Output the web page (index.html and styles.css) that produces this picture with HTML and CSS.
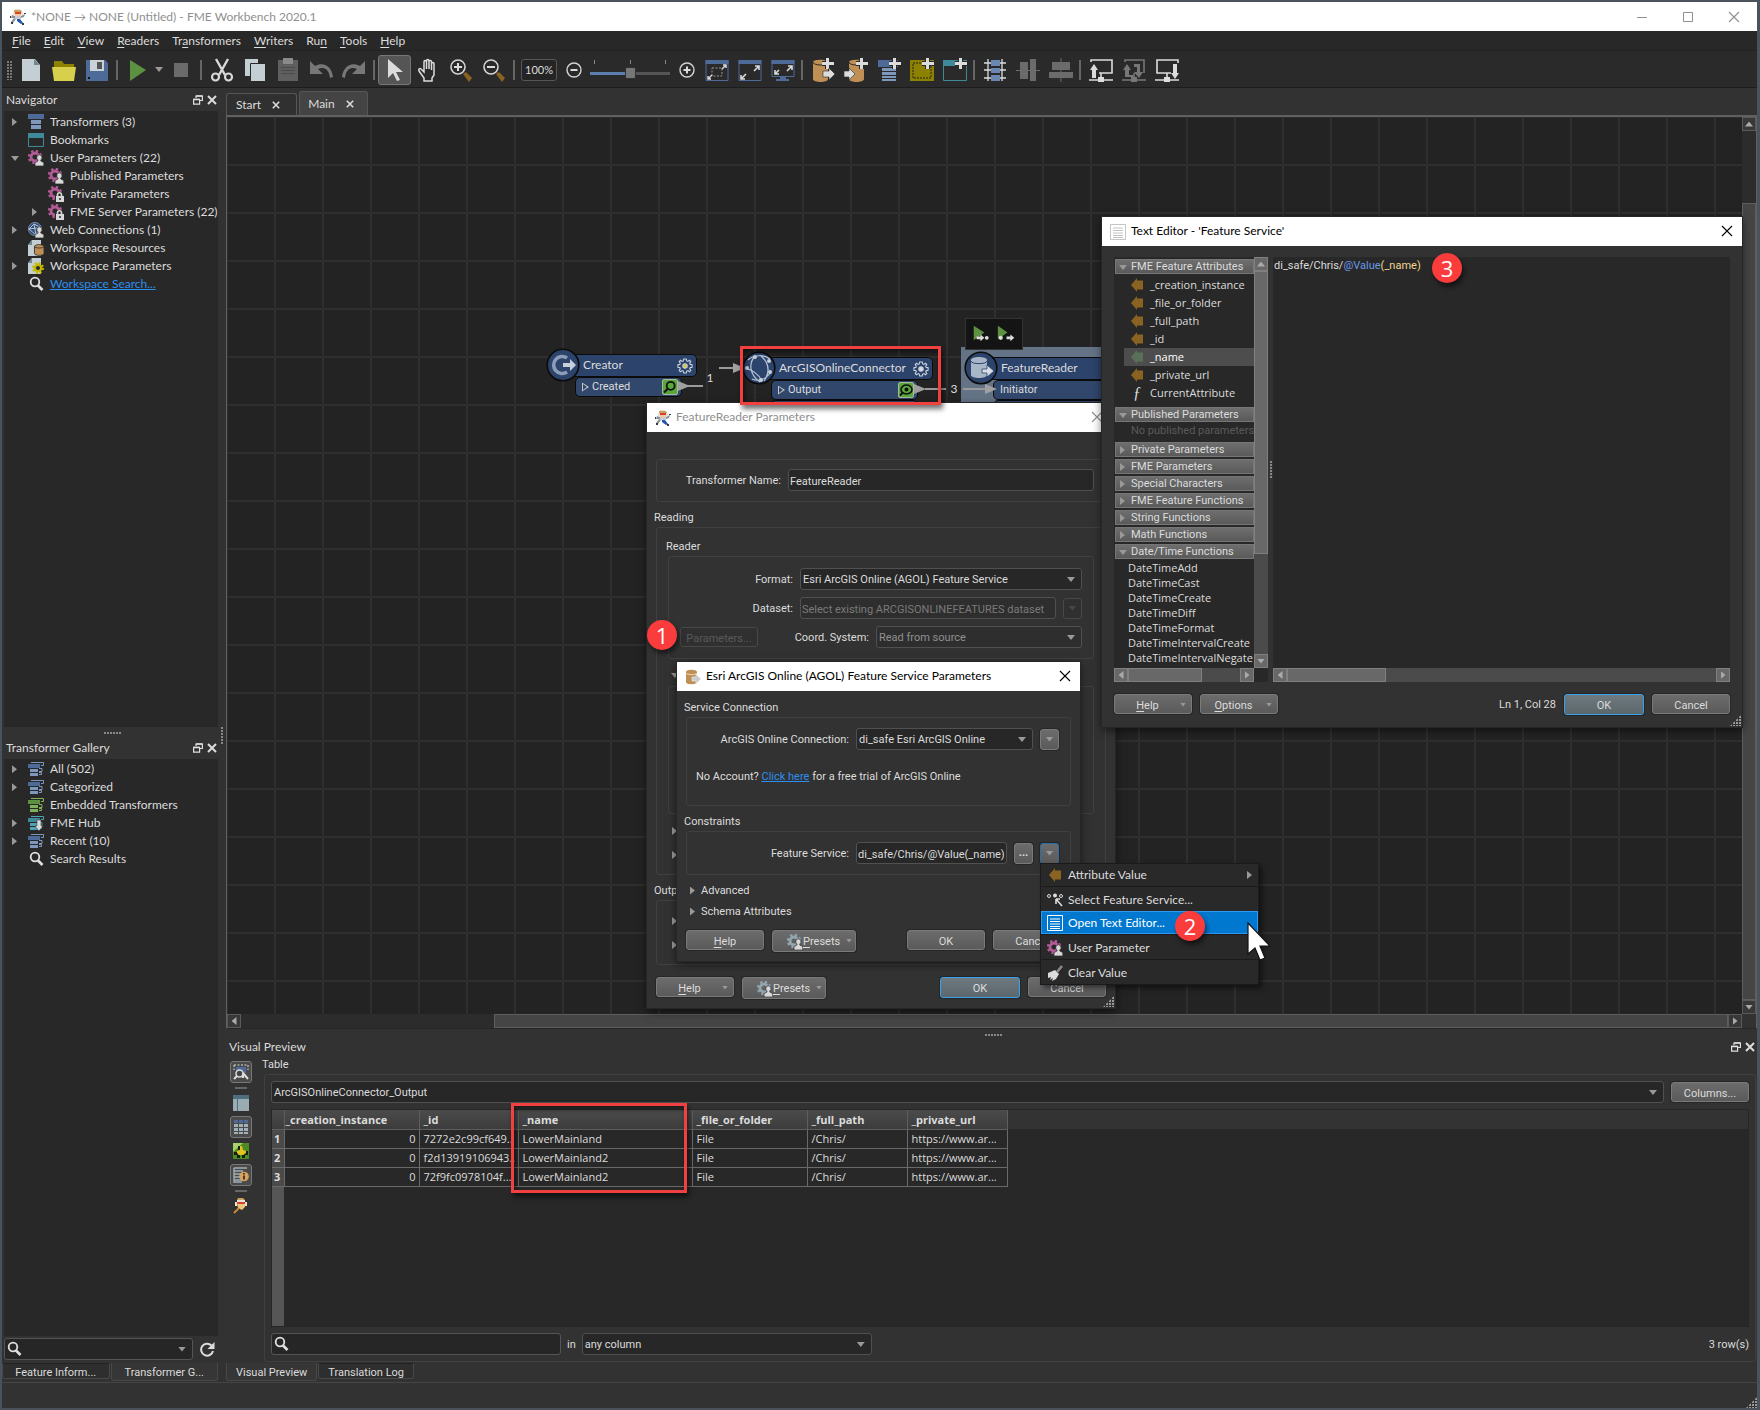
FILE: index.html
```html
<!DOCTYPE html>
<html lang="en">
<head>
<meta charset="utf-8">
<title>*NONE → NONE (Untitled) - FME Workbench 2020.1</title>
<link rel="stylesheet" href="styles.css">
</head>
<body>
<svg class="sprite" aria-hidden="true">
  <defs>
    <symbol id="i-fme" viewBox="0 0 16 16"><path fill="#c9a25e" d="M4 1h7l1 2H4z"/><path fill="#e8e2d8" d="M5 0h5v1H5zM3 3h2v3H3zM11 3h2v3h-2z"/><path fill="#d8402c" d="M5 3h6v2H5z"/><path fill="#f0c9a0" d="M5 5h6v2H5z"/><path fill="#8a8f98" d="M2 6l3 1v2L1 9zM11 7l4-2-1 3-3 1zM6 10l-3 4-2-1 3-4z"/><path fill="#c8ccd2" d="M5 7h6v3H5z"/><path fill="#1e56b0" d="M7 10h3l3 4-2 1-4-3z"/><path fill="#3a3a3a" d="M0 7h1v2H0zM14 4h2v1h-2zM1 13h2v2H1zM12 14h2v2h-2z"/></symbol>
    <symbol id="i-user" viewBox="0 0 16 16"><circle cx="7" cy="7" r="4" fill="none" stroke="currentColor" stroke-width="2.8"/><circle cx="7" cy="7" r="6" fill="none" stroke="currentColor" stroke-width="2.4" stroke-dasharray="2.36"/><path fill="#d8d8d8" stroke="#282828" stroke-width=".7" d="M11.500 4.800a2.500 2.800 0 0 1 1.300 5.200v1l3 1.600V16H7v-3.400l3-1.600v-1a2.500 2.800 0 0 1 1.500-5.200z"/></symbol>
    <symbol id="i-lock" viewBox="0 0 16 16"><circle cx="7" cy="7" r="4" fill="none" stroke="#b35b96" stroke-width="2.8"/><circle cx="7" cy="7" r="6" fill="none" stroke="#b35b96" stroke-width="2.4" stroke-dasharray="2.36"/><path fill="#282828" d="M7 6h9v10H7z"/><path fill="none" stroke="#d8d8d8" stroke-width="1.600" d="M9.500 11V9a2 2.200 0 0 1 4 0v2"/><path fill="#d8d8d8" d="M8 10h8v6H8z"/><path fill="#555" d="M11 12h2v2h-2z"/></symbol>
    <symbol id="i-transformers" viewBox="0 0 16 16"><path fill="#4d6a98" d="M0 0h16v5H0z"/><path fill="#7e97bd" d="M3 6h10v4H3zM3 11h10v4H3z"/></symbol>
    <symbol id="i-bookmark" viewBox="0 0 16 16"><path fill="#3f8a9a" d="M0 1h16v5H0z"/><path fill="none" stroke="#3f8a9a" d="M.5 3.500h15v11H.5z"/></symbol>
    <symbol id="i-web" viewBox="0 0 16 16"><circle cx="7" cy="7" r="6.500" fill="#2e4a78" stroke="#7b91b4"/><path fill="none" stroke="#b9c6da" d="M1 7l5-5 6 3-4 8-7-6 8-1M6 2l2 11"/><path fill="#d8d8d8" stroke="#282828" stroke-width=".7" d="M11.500 4.800a2.500 2.800 0 0 1 1.300 5.200v1l3 1.600V16H7v-3.400l3-1.600v-1a2.500 2.800 0 0 1 1.500-5.200z"/></symbol>
    <symbol id="i-resources" viewBox="0 0 16 16"><path fill="#c3cfd3" d="M4 0h9v16H0V5z"/><path fill="#6f8790" d="M0 5l4-5v5z"/><path fill="#c08f55" stroke="#282828" stroke-width=".8" d="M6.500 6.500C6.500 4 16 4 16 6.500v7c0 2.500-9.500 2.500-9.500 0z"/><path fill="none" stroke="#282828" stroke-width=".8" d="M6.500 6.500C6.500 8.500 16 8.500 16 6.500"/></symbol>
    <symbol id="i-wparams" viewBox="0 0 16 16"><path fill="#c3cfd3" d="M4 0h9v16H0V5z"/><path fill="#6f8790" d="M0 5l4-5v5z"/><circle cx="10" cy="10" r="3.200" fill="#282828" stroke="#c5b800" stroke-width="2.400"/><circle cx="10" cy="10" r="5" fill="none" stroke="#c5b800" stroke-width="2" stroke-dasharray="1.960"/></symbol>
    <symbol id="i-search" viewBox="0 0 16 16"><circle cx="7" cy="6" r="4.300" fill="none" stroke="#e0e0e0" stroke-width="1.800"/><path stroke="#e0e0e0" stroke-width="2.600" d="M10 9.500l4.500 4.500"/></symbol>
    <symbol id="i-cat" viewBox="0 0 16 16"><path d="M0 3h12v4H0z"/><path fill="currentColor" d="M2 8h8v3H2zM2 12h8v3H2z"/><path fill="none" stroke="currentColor" d="M3 1.500h12.500v3H13M11 7.500h3v3h-3M11 11.500h2.500v2H11"/></symbol>
    <symbol id="i-db" viewBox="0 0 16 16"><path fill="#c08f55" d="M1 3c0-3 11-3 11 0v10c0 3-11 3-11 0z"/><path fill="none" stroke="#f1e3cf" stroke-width=".9" d="M1 4c0 2 11 2 11 0"/><path fill="#c9ccce" stroke="#fff" stroke-width=".5" d="M7 8h4V5l5 5-5 5v-3H7z"/></symbol>
    <symbol id="i-doc" viewBox="0 0 16 16"><path fill="none" stroke="currentColor" d="M.5.5h15v15H.5zM3 4h10M3 6.500h10M3 9h10M3 11.500h10M3 13.500h10"/></symbol>
    <symbol id="i-attr" viewBox="0 0 12 14"><path fill="currentColor" d="M0 7l6-7v2.500h6v9H6V14z"/></symbol>
    <symbol id="i-float" viewBox="0 0 10 10"><path fill="none" stroke="#e0e0e0" stroke-width="1.200" d="M3 3V1h6.400v4.500H7M.6 4.400h6v4.800h-6z"/><path stroke="#e0e0e0" stroke-width="1.600" d="M3 1h6.500M.5 4.500h6"/></symbol>
    <symbol id="i-x" viewBox="0 0 10 10"><path stroke="currentColor" stroke-width="2" d="M1 1l8 8M9 1l-8 8"/></symbol>
    <symbol id="i-close" viewBox="0 0 12 12"><path stroke="currentColor" stroke-width="1.100" d="M1 1l10 10M11 1L1 11"/></symbol>
    <symbol id="i-zoom" viewBox="0 0 24 24"><circle cx="9" cy="9" r="7" fill="none" stroke="#d5d5d5" stroke-width="1.600"/><path fill="#8b6220" d="M14 16l3-2 6 6-3 4z"/></symbol>
    <symbol id="i-dbw" viewBox="0 0 24 24"><path fill="#c08f55" d="M2 4c0-3 15-3 15 0v17c0 4-15 4-15 0z"/><path fill="none" stroke="#282828" d="M2 4c0 4 15 4 15 0"/></symbol>
    <symbol id="i-plus" viewBox="0 0 24 24"><path fill="none" stroke="#282828" stroke-width="5" d="M17.500 0v11M12 5.500h12"/><path fill="none" stroke="#dcdcdc" stroke-width="3" d="M17.500 0v11M12 5.500h12"/></symbol>
    <symbol id="i-cog" viewBox="0 0 16 16"><path fill="none" stroke="#c9d3df" stroke-width="1.100" d="M6.700 1h2.600l.4 1.900 1.200.5 1.600-1.100 1.300 1.300-1.100 1.600.5 1.200 1.900.4v2.400l-1.900.4-.5 1.200 1.100 1.600-1.300 1.300-1.600-1.100-1.200.5-.4 1.900H6.700l-.4-1.900-1.200-.5-1.600 1.100-1.300-1.300 1.100-1.600-.5-1.200L.9 9.200V6.800l1.900-.4.5-1.200-1.100-1.600 1.300-1.300 1.600 1.100 1.200-.5z"/><circle cx="8" cy="8" r="2.200" fill="currentColor" stroke="#c9d3df" stroke-width="1.100"/></symbol>
    <symbol id="i-inspect" viewBox="0 0 16 16"><rect x=".5" y=".5" width="15" height="15" rx="1.500" fill="#58a93a" stroke="#a9b6a5"/><circle cx="8.700" cy="6.800" r="4" fill="none" stroke="#111" stroke-width="1.800"/><path stroke="#111" stroke-width="2.200" d="M6 9.500l-4 4"/></symbol>
    <symbol id="i-cached" viewBox="0 0 16 16"><rect x=".5" y=".5" width="15" height="15" rx="1.500" fill="#58a93a" stroke="#a9b6a5"/><ellipse cx="8.500" cy="7.500" rx="5.500" ry="4.500" fill="none" stroke="#111" stroke-width="1.600"/><circle cx="8.500" cy="7.500" r="2" fill="#111"/><path stroke="#111" stroke-width="2" d="M5 10.500l-3 3"/></symbol>
  </defs>
</svg>

<div class="app">
  <header class="titlebar">
    <svg class="ico16"><use href="#i-fme"/></svg>
    <h1>*NONE → NONE (Untitled) - FME Workbench 2020.1</h1>
    <div class="winbtns">
      <button aria-label="Minimize"><svg class="ico12" viewBox="0 0 12 12"><path stroke="currentColor" d="M1 6.500h10"/></svg></button>
      <button aria-label="Maximize"><svg class="ico12" viewBox="0 0 12 12"><path fill="none" stroke="currentColor" d="M1.500 1.500h9v9h-9z"/></svg></button>
      <button aria-label="Close"><svg class="ico12"><use href="#i-close"/></svg></button>
    </div>
  </header>

  <nav class="menubar">
    <button><u>F</u>ile</button><button><u>E</u>dit</button><button><u>V</u>iew</button><button><u>R</u>eaders</button><button>Tr<u>a</u>nsformers</button><button><u>W</u>riters</button><button>Ru<u>n</u></button><button><u>T</u>ools</button><button><u>H</u>elp</button>
  </nav>

  <div class="toolbar">
    <span class="handle"></span>
    <button class="tb" aria-label="New"><svg viewBox="0 0 24 24"><path fill="#c3cfd3" d="M3 1h13l5 6v16H3z"/><path fill="#6f8790" d="M15 1l6 6h-6z"/></svg></button>
    <button class="tb" aria-label="Open"><svg viewBox="0 0 24 24"><path fill="#8c8200" d="M2 3h8l2 3h10v6H2z"/><path fill="#d8d04c" d="M0 9h24l-2 14H2z"/></svg></button>
    <button class="tb" aria-label="Save"><svg viewBox="0 0 24 24"><path fill="#4d6a98" d="M1 2h19l3 3v18H1z"/><path fill="#c9d2d6" d="M5 2h14v11H5z"/><path fill="#555" d="M12 4h5v7h-5z"/><path fill="#111" d="M3 19h2v2H3z"/></svg></button>
    <span class="sep"></span>
    <button class="tb" aria-label="Run"><svg viewBox="0 0 24 24"><path fill="#5d9142" d="M4 2l16 10L4 23z"/></svg></button>
    <button class="tb tiny" aria-label="Run options"><span class="caret"></span></button>
    <button class="tb" aria-label="Stop"><svg viewBox="0 0 24 24"><path fill="#6b6b6b" d="M5 5h14v14H5z"/></svg></button>
    <span class="sep"></span>
    <button class="tb" aria-label="Cut"><svg viewBox="0 0 24 24"><path fill="none" stroke="#d8d8d8" stroke-width="2.400" d="M6 1l9 16M18 1L9 17"/><circle cx="5.500" cy="19" r="3.500" fill="none" stroke="#d8d8d8" stroke-width="2.200"/><circle cx="18.500" cy="19" r="3.500" fill="none" stroke="#d8d8d8" stroke-width="2.200"/></svg></button>
    <button class="tb" aria-label="Copy"><svg viewBox="0 0 24 24"><path fill="#c3cfd3" d="M2 1h13v17H2z"/><path fill="#c3cfd3" stroke="#282828" d="M7.500 5.500h15v18h-15z"/></svg></button>
    <button class="tb" aria-label="Paste"><svg viewBox="0 0 24 24"><path fill="#5f5f5f" d="M2 2h20v21H2z"/><path fill="#8a8a8a" d="M7 0h10v6H7z"/><path stroke="#4a4a4a" d="M5 9.500h14M5 12.500h14M5 15.500h14"/></svg></button>
    <button class="tb" aria-label="Undo"><svg viewBox="0 0 24 24"><path fill="#777" d="M1 3v13h13l-5-5c7-3 11 1 12 9l3-1C23 9 15 3 6 8z"/></svg></button>
    <button class="tb" aria-label="Redo"><svg viewBox="0 0 24 24"><path fill="#777" d="M23 3v13H10l5-5c-7-3-11 1-12 9l-3-1C1 9 9 3 18 8z"/></svg></button>
    <span class="sep"></span>
    <button class="tb active" aria-label="Select"><svg viewBox="0 0 24 24"><path fill="#dcdcdc" d="M5 1l15 13h-7l4 8-3 1-4-8-5 5z"/></svg></button>
    <button class="tb" aria-label="Pan"><svg viewBox="0 0 24 24"><path fill="none" stroke="#dcdcdc" stroke-width="1.500" d="M8 23v-3L3 13c-1-2 1-3 2-2l3 3V4c0-2 2-2 2.500 0v7V3c0-2 2.500-2 2.500 0v8V4c0-2 2.500-2 2.500 0v8V6c0-2 2.500-2 2.500 0v11l-2 3v3z"/></svg></button>
    <button class="tb" aria-label="Zoom in"><svg viewBox="0 0 24 24"><use href="#i-zoom"/><path stroke="#dcdcdc" stroke-width="2" d="M9 5v8M5 9h8"/></svg></button>
    <button class="tb" aria-label="Zoom out"><svg viewBox="0 0 24 24"><use href="#i-zoom"/><path stroke="#dcdcdc" stroke-width="2" d="M5 9h8"/></svg></button>
    <span class="sep"></span>
    <input class="zoomval" aria-label="Zoom level" value="100%">
    <button class="tb" aria-label="Decrease zoom"><svg class="ico16" viewBox="0 0 16 16"><circle cx="8" cy="8" r="7" fill="none" stroke="#d5d5d5" stroke-width="1.400"/><path stroke="#dcdcdc" stroke-width="2" d="M4.500 8h7"/></svg></button>
    <input class="slider" type="range" aria-label="Zoom" value="50">
    <button class="tb narrow" aria-label="Increase zoom"><svg class="ico16" viewBox="0 0 16 16"><circle cx="8" cy="8" r="7" fill="none" stroke="#d5d5d5" stroke-width="1.400"/><path stroke="#dcdcdc" stroke-width="2" d="M4.500 8h7M8 4.500v7"/></svg></button>
    <button class="tb" aria-label="Zoom to selection"><svg viewBox="0 0 24 24"><path fill="none" stroke="#4d6a98" d="M1 2.500h22v20H1z"/><path fill="#4d6a98" d="M.5 2h23v4H.5z"/><path fill="none" stroke="#999" stroke-dasharray="2 1.500" d="M7 10h10v8H7z"/><path stroke="#dcdcdc" stroke-width="1.400" fill="none" d="M17 11l4-4M18 7h3v3M7 17l-4 4M3 18v3h3"/></svg></button>
    <button class="tb" aria-label="Zoom extents"><svg viewBox="0 0 24 24"><path fill="none" stroke="#4d6a98" d="M1 2.500h22v20H1z"/><path fill="#4d6a98" d="M.5 2h23v4H.5z"/><path stroke="#dcdcdc" stroke-width="1.600" fill="none" d="M16 13l5-5M17 8h4v4M8 16l-5 5M3 17v4h4"/></svg></button>
    <button class="tb" aria-label="Full screen"><svg viewBox="0 0 24 24"><path fill="none" stroke="#4d6a98" d="M1 2.500h22v16H1z"/><path fill="#4d6a98" d="M.5 2h23v4H.5zM9 19h6v2h3v2H5v-2h4z"/><path stroke="#dcdcdc" stroke-width="1.600" fill="none" d="M16 13l5-5M17 8h4v4M8 12l-4 4M4 12v4h4"/></svg></button>
    <span class="sep"></span>
    <button class="tb" aria-label="Add reader"><svg viewBox="0 0 24 24"><use href="#i-dbw"/><use href="#i-plus" x="-1"/><path fill="#dcdcdc" stroke="#282828" stroke-width=".6" d="M12 13h6v-3l6 6-6 6v-3h-6z"/></svg></button>
    <button class="tb" aria-label="Add writer"><svg viewBox="0 0 24 24"><use href="#i-dbw" x="3"/><use href="#i-plus"/><path fill="#dcdcdc" stroke="#282828" stroke-width=".6" d="M0 13h5v-3l6 6-6 6v-3H0z"/></svg></button>
    <button class="tb" aria-label="Add transformer"><svg viewBox="0 0 24 24"><path fill="#4d6a98" d="M1 2h20v7H1z"/><path fill="#7e97bd" d="M5 10h14v3H5zM5 14h14v3H5zM5 18h14v2H5zM5 21h14v2H5z"/><use href="#i-plus"/></svg></button>
    <button class="tb" aria-label="Add annotation"><svg viewBox="0 0 24 24"><path fill="#8c8200" d="M0 2h24v21H0z"/><path fill="none" stroke="#222" stroke-dasharray="2 1" d="M3 5h18v15H3z"/><use href="#i-plus"/></svg></button>
    <button class="tb" aria-label="Add bookmark"><svg viewBox="0 0 24 24"><path fill="none" stroke="#3f8a9a" d="M.5 2.500h23v20H.5z"/><path fill="#3f8a9a" d="M0 2h24v6H0z"/><use href="#i-plus"/></svg></button>
    <span class="sep"></span>
    <button class="tb" aria-label="Grid layout"><svg viewBox="0 0 24 24"><path stroke="#dcdcdc" stroke-width="1.300" d="M5 1v22M19 1v22M1 5h22M1 12h22M1 20h22"/><path fill="#6b88b5" d="M8 2h9v6H8zM8 10h9v5H8zM8 17h9v6H8z"/></svg></button>
    <button class="tb" aria-label="Align vertical"><svg viewBox="0 0 24 24"><path stroke="#6b6b6b" d="M0 12.500h24"/><path fill="#6b6b6b" d="M4 4h8v17H4zM14 1h6v22h-6z"/></svg></button>
    <button class="tb" aria-label="Align horizontal"><svg viewBox="0 0 24 24"><path stroke="#6b6b6b" d="M12 0v24"/><path fill="#6b6b6b" d="M3 4h18v8H3zM0 14h24v6H0z"/></svg></button>
    <span class="sep"></span>
    <button class="tb" aria-label="Upload"><svg viewBox="0 0 24 24"><path fill="none" stroke="#dcdcdc" stroke-width="1.600" d="M2 4V2h21v13H10M12 15v6M0 22h24"/><path fill="#dcdcdc" d="M5 6l4 6H7v8H3v-8H1zM9 19h6v5H9z"/></svg></button>
    <button class="tb" aria-label="Republish"><svg viewBox="0 0 24 24"><path fill="none" stroke="#777" stroke-width="1.600" d="M3 4V2h19v13M12 15v6M0 22h24"/><path fill="#777" d="M5 6l4 6H7v5h4v2H3v-7H1zM17 20l-5-6h3V9h-3V6h6v8h3zM9 19h6v5H9z"/></svg></button>
    <button class="tb" aria-label="Download"><svg viewBox="0 0 24 24"><path fill="none" stroke="#dcdcdc" stroke-width="1.600" d="M16 15H2V2h21v3M12 15v6M0 22h24"/><path fill="#dcdcdc" d="M18 6h4v9h2l-4 6-4-6h2zM9 19h6v5H9z"/></svg></button>
  </div>

  <div class="workspace">
    <aside class="docks">
      <div class="dock-title"><h2>Navigator</h2><button aria-label="Float"><svg class="ico10"><use href="#i-float"/></svg></button><button aria-label="Close"><svg class="ico10"><use href="#i-x"/></svg></button></div>
      <ul class="tree navigator">
        <li><span class="tw right"></span><svg class="ico16"><use href="#i-transformers"/></svg>Transformers (3)</li>
        <li><span class="tw"></span><svg class="ico16"><use href="#i-bookmark"/></svg>Bookmarks</li>
        <li><span class="tw down"></span><svg class="ico16 pink"><use href="#i-user"/></svg>User Parameters (22)</li>
        <li class="child"><span class="tw"></span><svg class="ico16 pink"><use href="#i-user"/></svg>Published Parameters</li>
        <li class="child"><span class="tw"></span><svg class="ico16"><use href="#i-lock"/></svg>Private Parameters</li>
        <li class="child"><span class="tw right"></span><svg class="ico16"><use href="#i-lock"/></svg>FME Server Parameters (22)</li>
        <li><span class="tw right"></span><svg class="ico16"><use href="#i-web"/></svg>Web Connections (1)</li>
        <li><span class="tw"></span><svg class="ico16"><use href="#i-resources"/></svg>Workspace Resources</li>
        <li><span class="tw right"></span><svg class="ico16"><use href="#i-wparams"/></svg>Workspace Parameters</li>
        <li><span class="tw"></span><svg class="ico16"><use href="#i-search"/></svg><a href="#search">Workspace Search...</a></li>
      </ul>
      <div class="hsplit"></div>
      <div class="dock-title"><h2>Transformer Gallery</h2><button aria-label="Float"><svg class="ico10"><use href="#i-float"/></svg></button><button aria-label="Close"><svg class="ico10"><use href="#i-x"/></svg></button></div>
      <ul class="tree gallery">
        <li><span class="tw right"></span><svg class="ico16 blue"><use href="#i-cat"/></svg>All (502)</li>
        <li><span class="tw right"></span><svg class="ico16 blue"><use href="#i-cat"/></svg>Categorized</li>
        <li><span class="tw"></span><svg class="ico16 green"><use href="#i-cat"/></svg>Embedded Transformers</li>
        <li><span class="tw right"></span><svg class="ico16 teal" viewBox="0 0 16 16"><use href="#i-cat"/><path fill="#dcdcdc" stroke="#282828" stroke-width=".5" d="M9 5h4v6h2l-4 5-4-5h2z"/></svg>FME Hub</li>
        <li><span class="tw right"></span><svg class="ico16 blue"><use href="#i-cat"/></svg>Recent (10)</li>
        <li><span class="tw"></span><svg class="ico16"><use href="#i-search"/></svg>Search Results</li>
      </ul>
      <div class="dock-search">
        <div class="searchbox"><svg class="ico16"><use href="#i-search"/></svg><input aria-label="Search transformers"><span class="caret"></span></div>
        <button aria-label="Refresh"><svg class="ico16" viewBox="0 0 16 16"><path fill="none" stroke="#dcdcdc" stroke-width="2" d="M12.500 4.500A6 6 0 1 0 14 10"/><path fill="#dcdcdc" d="M15.500 1v7h-7z"/></svg></button>
      </div>
      <div class="bottom-tabs"><button>Feature Inform...</button><button class="on">Transformer G...</button></div>
    </aside>
    <div class="vsplit"></div>

    <main class="main">
      <div class="doc-tabs">
        <button>Start<svg class="ico8"><use href="#i-x"/></svg></button>
        <button class="on">Main<svg class="ico8"><use href="#i-x"/></svg></button>
      </div>
      <div class="canvas-frame">
        <div class="canvas">
          <div class="bookmark"></div>
          <svg class="wires" viewBox="0 0 800 300" width="800" height="300" fill="none" stroke="#9a9a9a" stroke-width="2"><path d="M460 269h16M492 251h16M698 272h21M736 272h24"/></svg>
          <div class="node creator">
            <div class="node-head"><span>Creator</span><svg class="ico16 lit"><use href="#i-cog"/></svg></div>
            <div class="port"><span class="pt"></span><span>Created</span><svg class="ico16"><use href="#i-inspect"/></svg></div>
            <svg class="orb" viewBox="0 0 34 34"><circle cx="17" cy="17" r="15.800" fill="#2c436b" stroke="#0b0b0b" stroke-width="1.600"/><path fill="none" stroke="#8c9db8" stroke-width="3.600" d="M21 10a8.500 8.500 0 1 0 0 14"/><path fill="#c6ced9" d="M17 15h7v-4l6 6-6 6v-4h-7z"/></svg>
          </div>
          <span class="tip t1"></span>
          <span class="count c1">1</span>
          <span class="tip t2"></span>
          <div class="node agol">
            <div class="node-head"><span>ArcGISOnlineConnector</span><svg class="ico16"><use href="#i-cog"/></svg></div>
            <div class="port"><span class="pt"></span><span>Output</span><svg class="ico16"><use href="#i-cached"/></svg></div>
            <div class="port"></div>
            <svg class="orb" viewBox="0 0 34 34"><circle cx="17" cy="17" r="15.800" fill="#2c436b" stroke="#0b0b0b" stroke-width="1.600"/><path fill="none" stroke="#b9c6da" stroke-width="1.200" d="M6 9c5-5 16-6 22-1M13 5C6 13 8 24 18 31M19 5c8 7 9 16 3 25M3 17c8 2 14 7 17 13M10 28c7 3 14 0 19-7"/><g fill="#c6ced9"><circle cx="13" cy="6" r="2"/><circle cx="27" cy="10" r="2"/><circle cx="5" cy="17" r="2"/><circle cx="19" cy="29" r="2"/><circle cx="28" cy="21" r="2"/></g></svg>
          </div>
          <span class="tip t3"></span>
          <span class="count c2">3</span>
          <div class="node reader">
            <div class="node-head"><span>FeatureReader</span><svg class="ico16"><use href="#i-cog"/></svg></div>
            <div class="port"><span>Initiator</span></div>
            <div class="port"></div>
            <svg class="orb" viewBox="0 0 34 34"><circle cx="17" cy="17" r="15.800" fill="#2c436b" stroke="#0b0b0b" stroke-width="1.600"/><path fill="#a9b6c8" d="M7 9c0-4 16-4 16 0v15c0 4-16 4-16 0z"/><path fill="none" stroke="#2c436b" d="M7 10c0 3.500 16 3.500 16 0"/><path fill="#d8dde4" stroke="#2c436b" stroke-width=".8" d="M18 18h5v-4l7 6-7 6v-4h-5z"/></svg>
          </div>
          <span class="tip t4"></span>
          <div class="runbar"><svg viewBox="0 0 58 32"><path fill="#5d9142" d="M8 7l11 7-11 8zM33 7l10 7-10 7z"/><path fill="#dcdcdc" d="M11 18h4v-2l4 3.500-4 3.500v-2h-4zM42 18h4v-2l4 3.500-4 3.500v-2h-4z"/><circle cx="21.500" cy="19.500" r="2" fill="#dcdcdc"/><circle cx="36" cy="19.500" r="2.200" fill="#dcdcdc"/></svg></div>
        </div>
        <div class="sb v"><button aria-label="Scroll up"><i class="up"></i></button><div class="track"><div class="thumb" style="margin-top:72px;height:calc(100% - 72px)"></div></div><button aria-label="Scroll down"><i class="dn"></i></button></div>
        <div class="sb h dim"><button aria-label="Scroll left"><i class="lt"></i></button><div class="track"><div class="thumb" style="margin-left:17%;width:83%"></div></div><button aria-label="Scroll right"><i class="rt"></i></button></div>
      </div>

      <div class="hsplit low"></div>
      <section class="preview">
        <div class="dock-title"><h2>Visual Preview</h2><button aria-label="Float"><svg class="ico10"><use href="#i-float"/></svg></button><button aria-label="Close"><svg class="ico10"><use href="#i-x"/></svg></button></div>
        <div class="preview-body">
          <div class="side-tools">
            <button class="on" aria-label="Inspect selection"><svg class="ico16" viewBox="0 0 16 16"><path fill="#4d6a98" d="M3 3h10v6H3z"/><path fill="none" stroke="#dcdcdc" stroke-dasharray="2 1.500" d="M1 1h14v5M1 1v5"/><circle cx="6.500" cy="9.500" r="3.500" fill="#444" stroke="#dcdcdc" stroke-width="1.500"/><path stroke="#dcdcdc" stroke-width="2" d="M4 12l-3 3M10 9l5 6M10 9v5"/></svg></button>
            <hr>
            <button aria-label="Table view"><svg class="ico16" viewBox="0 0 16 16"><path fill="#9aabb3" d="M0 0h16v16H0z"/><path fill="#4f6f7c" d="M0 0h16v4H0z"/><path stroke="#4f6f7c" d="M4.500 4v12"/></svg></button>
            <button class="on" aria-label="Grid"><svg class="ico16" viewBox="0 0 16 16"><path fill="#4d6a98" d="M1 1h4v3H1zM6 1h4v3H6zM11 1h4v3h-4z"/><path fill="#9fb0b8" d="M1 5h4v3H1zM6 5h4v3H6zM11 5h4v3h-4zM1 9h4v3H1zM6 9h4v3H6zM11 9h4v3h-4zM1 13h4v2H1zM6 13h4v2H6zM11 13h4v2h-4z"/></svg></button>
            <button aria-label="Graphics"><svg class="ico16" viewBox="0 0 16 16"><path fill="#4c8a22" d="M0 0h16v16H0z"/><path fill="#a9cf6d" d="M0 0h10L0 9z"/><path fill="#16200e" d="M1 9h4v3H1zM11 8h4v4h-4zM4 12h3v3H4zM9 12h3v3H9zM5 3h2v4H5z"/><path fill="#e2c320" d="M7 3h2l1 4 3 1v2l-3 2H6L4 10V8l3-1z"/></svg></button>
            <button class="on" aria-label="Feature information"><svg class="ico16" viewBox="0 0 16 16"><path fill="none" stroke="#9fb0b8" stroke-width="1.400" d="M1 1h13M1 4h9M1 7h7M1 10h6M1 13h8M1 1v14h8"/><circle cx="11" cy="9.500" r="4.800" fill="#d9a25c"/><path stroke="#222" stroke-width="1.600" d="M11 8.500v4M11 6v1.500"/></svg></button>
            <hr>
            <button aria-label="Inspector"><svg class="ico16" viewBox="0 0 16 16"><path fill="#c9a25e" d="M5 0h5l2 2H4z"/><path fill="#e9e4da" d="M4 2h8v2H4zM2 4h2v4H2zM12 4h2v4h-2z"/><path fill="#d8402c" d="M4 4h8v2H4z"/><path fill="#f0c27a" d="M4 6h8v3l-3 3-4-2z"/><path stroke="#c98a3c" stroke-width="2" d="M6 10l-5 5"/></svg></button>
          </div>
          <div class="table-panel">
            <h3>Table</h3>
            <div class="group">
              <div class="row">
                <span class="select wide"><select aria-label="Feature type"><option>ArcGISOnlineConnector_Output</option></select></span>
                <button class="btn">Columns...</button>
              </div>
              <div class="grid-wrap">
                <div class="grid-view">
                  <table>
                    <colgroup><col class="w-n"><col class="w-ci"><col class="w-id"><col class="w-nm"><col class="w-ff"><col class="w-fp"><col class="w-pu"></colgroup>
                    <thead><tr><th></th><th class="tight">_creation_instance</th><th>_id</th><th>_name</th><th>_file_or_folder</th><th>_full_path</th><th>_private_url</th></tr></thead>
                    <tbody>
                      <tr><th>1</th><td class="num">0</td><td>7272e2c99cf649..</td><td>LowerMainland</td><td>File</td><td>/Chris/</td><td>https://www.ar...</td></tr>
                      <tr><th>2</th><td class="num">0</td><td>f2d13919106943..</td><td>LowerMainland2</td><td>File</td><td>/Chris/</td><td>https://www.ar...</td></tr>
                      <tr><th>3</th><td class="num">0</td><td>72f9fc0978104f...</td><td>LowerMainland2</td><td>File</td><td>/Chris/</td><td>https://www.ar...</td></tr>
                    </tbody>
                  </table>
                </div>
                <div class="callout name-col"></div>
              </div>
              <div class="row">
                <div class="searchbox filter"><svg class="ico16"><use href="#i-search"/></svg><input aria-label="Filter rows"></div>
                <label for="col">in</label>
                <span class="select col"><select id="col"><option>any column</option></select></span>
                <output>3 row(s)</output>
              </div>
            </div>
          </div>
        </div>
        <div class="bottom-tabs"><button class="on">Visual Preview</button><button>Translation Log</button></div>
      </section>
    </main>
  </div>
  <footer class="status"><span class="grip"></span></footer>

  <section class="dialog fr" role="dialog" aria-label="FeatureReader Parameters">
    <header class="titlebar"><svg class="ico16"><use href="#i-fme"/></svg><h2>FeatureReader Parameters</h2><button class="x" aria-label="Close"><svg class="ico12"><use href="#i-close"/></svg></button></header>
    <div class="body">
      <div class="group form first"><label for="tn">Transformer Name:</label><input id="tn" value="FeatureReader"></div>
      <h3>Reading</h3>
      <div class="group nest">
        <h3>Reader</h3>
        <div class="group reader-form">
          <div class="form"><label for="fmt">Format:</label><span class="select"><select id="fmt"><option>Esri ArcGIS Online (AGOL) Feature Service</option></select></span></div>
          <div class="form"><label for="ds">Dataset:</label><div class="row"><input id="ds" disabled placeholder="Select existing ARCGISONLINEFEATURES dataset"><button class="btn drop off" disabled aria-label="Dataset options"><span class="caret"></span></button></div></div>
          <div class="coord"><button class="btn off" disabled>Parameters...</button><label for="cs">Coord. System:</label><span class="select muted"><select id="cs"><option>Read from source</option></select></span></div>
        </div>
        <div class="fold open"><span class="tw down"></span></div>
        <div class="group blank"></div>
        <div class="folds"><div class="fold"><span class="tw right"></span></div><div class="fold"><span class="tw right"></span></div></div>
      </div>
      <h3>Output</h3>
      <div class="group outputs"><div class="fold"><span class="tw right"></span></div><div class="fold"><span class="tw right"></span></div></div>
      <div class="actions">
        <button class="btn menu"><span><u>H</u>elp</span><span class="caret"></span></button>
        <button class="btn menu presets"><svg class="ico16 pale"><use href="#i-user"/></svg><span><u>P</u>resets</span><span class="caret"></span></button>
        <span class="grow"></span>
        <button class="btn primary">OK</button><button class="btn">Cancel</button>
      </div>
      <span class="grip"></span>
    </div>
  </section>

  <div class="callout agol-node"></div>

  <section class="dialog ag" role="dialog" aria-label="Esri ArcGIS Online (AGOL) Feature Service Parameters">
    <header class="titlebar front"><svg class="ico16"><use href="#i-db"/></svg><h2>Esri ArcGIS Online (AGOL) Feature Service Parameters</h2><button class="x" aria-label="Close"><svg class="ico12"><use href="#i-close"/></svg></button></header>
    <div class="body">
      <h3>Service Connection</h3>
      <div class="group conn">
        <div class="form"><label for="ac">ArcGIS Online Connection:</label><div class="row"><span class="select"><select id="ac"><option>di_safe Esri ArcGIS Online</option></select></span><button class="btn drop" aria-label="Connection options"><span class="caret"></span></button></div></div>
        <p>No Account? <a href="#trial">Click here</a> for a free trial of ArcGIS Online</p>
      </div>
      <h3>Constraints</h3>
      <div class="group conn">
        <div class="form"><label for="fs">Feature Service:</label><div class="row"><input id="fs" value="di_safe/Chris/@Value(_name)"><button class="btn drop dots" aria-label="Browse">...</button><button class="btn drop focus" aria-label="Value options"><span class="caret"></span></button></div></div>
      </div>
      <div class="details"><div class="fold"><span class="tw right"></span>Advanced</div><div class="fold"><span class="tw right"></span>Schema Attributes</div></div>
      <div class="actions">
        <button class="btn"><span><u>H</u>elp</span></button>
        <button class="btn menu presets"><svg class="ico16 pale"><use href="#i-user"/></svg><span><u>P</u>resets</span><span class="caret"></span></button>
        <span class="grow"></span>
        <button class="btn">OK</button><button class="btn">Cancel</button>
      </div>
    </div>
  </section>

  <ul class="popup" role="menu">
    <li role="menuitem"><svg class="ico16 gold" viewBox="0 0 16 16"><use href="#i-attr" x="2" y="1" width="12" height="14"/></svg>Attribute Value<span class="tw right"></span></li>
    <li role="menuitem" class="line"><svg class="ico16" viewBox="0 0 16 16"><circle cx="2" cy="4" r="1.500" fill="none" stroke="#dcdcdc"/><circle cx="8" cy="3.500" r="2" fill="#dcdcdc"/><circle cx="14" cy="4" r="1.500" fill="none" stroke="#dcdcdc"/><path stroke="#dcdcdc" stroke-width="1.600" d="M9 7l6 7M9 7v5M9 7h4"/></svg>Select Feature Service...</li>
    <li role="menuitem" class="hot"><svg class="ico16"><use href="#i-doc"/></svg>Open Text Editor...</li>
    <li role="menuitem" class="line"><svg class="ico16 pink"><use href="#i-user"/></svg>User Parameter</li>
    <li role="menuitem" class="line"><svg class="ico16" viewBox="0 0 16 16"><path fill="#dcdcdc" d="M1 8l7-3 4 4-3 5-4 2 1-3-3 2 1-3-3 1z"/><path stroke="#8a8a8a" stroke-width="2.600" d="M10 7l5-6"/></svg>Clear Value</li>
  </ul>

  <section class="dialog te" role="dialog" aria-label="Text Editor">
    <header class="titlebar front"><svg class="ico16 ghost"><use href="#i-doc"/></svg><h2>Text Editor - 'Feature Service'</h2><button class="x" aria-label="Close"><svg class="ico12"><use href="#i-close"/></svg></button></header>
    <div class="body">
      <div class="panes">
        <div class="pane palette">
          <div class="plist">
            <h4><span class="tw down"></span>FME Feature Attributes</h4>
            <ul class="attrs">
              <li><svg class="attr gold"><use href="#i-attr"/></svg>_creation_instance</li>
              <li><svg class="attr gold"><use href="#i-attr"/></svg>_file_or_folder</li>
              <li><svg class="attr gold"><use href="#i-attr"/></svg>_full_path</li>
              <li><svg class="attr gold"><use href="#i-attr"/></svg>_id</li>
              <li class="sel"><svg class="attr moss"><use href="#i-attr"/></svg>_name</li>
              <li><svg class="attr gold"><use href="#i-attr"/></svg>_private_url</li>
              <li><i class="fn">ƒ</i>CurrentAttribute</li>
            </ul>
            <h4><span class="tw down"></span>Published Parameters</h4>
            <p>No published parameters</p>
            <h4><span class="tw right"></span>Private Parameters</h4>
            <h4><span class="tw right"></span>FME Parameters</h4>
            <h4><span class="tw right"></span>Special Characters</h4>
            <h4><span class="tw right"></span>FME Feature Functions</h4>
            <h4><span class="tw right"></span>String Functions</h4>
            <h4><span class="tw right"></span>Math Functions</h4>
            <h4><span class="tw down"></span>Date/Time Functions</h4>
            <ul class="funcs"><li>DateTimeAdd</li><li>DateTimeCast</li><li>DateTimeCreate</li><li>DateTimeDiff</li><li>DateTimeFormat</li><li>DateTimeIntervalCreate</li><li>DateTimeIntervalNegate</li></ul>
          </div>
          <div class="sb v lite"><button aria-label="Scroll up"><i class="up"></i></button><div class="track"><div class="thumb" style="height:74%"></div></div><button aria-label="Scroll down"><i class="dn"></i></button></div>
          <div class="sb h lite"><button aria-label="Scroll left"><i class="lt"></i></button><div class="track"><div class="thumb" style="width:66%"></div></div><button aria-label="Scroll right"><i class="rt"></i></button></div>
        </div>
        <div class="vsplit thin"></div>
        <div class="pane editor">
          <div class="code" role="textbox" aria-multiline="true" tabindex="0">di_safe/Chris/<span class="kw">@Value</span><span class="paren">(</span><span class="arg">_name</span><span class="paren">)</span></div>
          <div class="sb h lite"><button aria-label="Scroll left"><i class="lt"></i></button><div class="track"><div class="thumb" style="width:23%"></div></div><button aria-label="Scroll right"><i class="rt"></i></button></div>
        </div>
      </div>
      <div class="actions">
        <button class="btn menu"><span><u>H</u>elp</span><span class="caret"></span></button>
        <button class="btn menu"><span><u>O</u>ptions</span><span class="caret"></span></button>
        <span class="grow pos">Ln 1, Col 28</span>
        <button class="btn primary">OK</button><button class="btn">Cancel</button>
      </div>
      <span class="grip"></span>
    </div>
  </section>

  <span class="badge b1">1</span>
  <span class="badge b2">2</span>
  <span class="badge b3">3</span>
  <svg class="pointer" viewBox="0 0 24 40"><path fill="#fff" stroke="#111" stroke-width="1.200" d="M1 1v31l7-6 5 12 5-2-5-12h10z"/></svg>
</div>
</body>
</html>
```
FILE: styles.css
```css
* { box-sizing: border-box; }
body { margin: 0; background: #323232; color: #dcdcdc; font: 12px/18px Lato, "Open Sans", sans-serif; }
h1, h2, h3, h4, p, ul { margin: 0; padding: 0; font-size: inherit; font-weight: 400; list-style: none; }
button, input, select { font: inherit; color: inherit; margin: 0; padding: 0; border: 0; background: none; outline: 0; }
a { color: #2a8ff0; }
svg { flex: none; display: block; }
.sprite { position: absolute; width: 0; height: 0; }
.ico16 { width: 16px; height: 16px; }
.ico12 { width: 12px; height: 12px; }
.ico10 { width: 10px; height: 10px; }
.ico8 { width: 8px; height: 8px; }
.pink { color: #b35b96; }
.pale { color: #93a5ae; }
.gold { color: #8a6222; }
.moss { color: #587058; }
.ghost { color: #c4c4c4; }
.blue { color: #7e97bd; fill: #4d6a98; }
.green { color: #7fb05a; fill: #5d9142; }
.teal { color: #4fa3b5; fill: #3f8a9a; }
.lit { color: #d8c52a; }

.app { position: relative; display: flex; flex-direction: column; min-height: 100vh; padding: 2px 3px 2px 2px; background: #4a525b; overflow: hidden; }
.app > * { flex: none; }

.titlebar { display: flex; align-items: center; height: 29px; padding-left: 8px; gap: 5px; background: #fff; color: #8f8f8f; white-space: nowrap; }
.titlebar.front { color: #000; }
.titlebar h1, .titlebar h2 { flex: 1; }
.titlebar h2 { padding-bottom: 2px; }
.winbtns { display: flex; }
.winbtns button { width: 46px; display: grid; place-items: center; }

.menubar { display: flex; height: 19px; padding-left: 4px; background: #282828; }
.menubar button { padding: 0 7px 0 6px; line-height: 19px; }
u { text-underline-offset: 2px; }

.toolbar { display: flex; align-items: center; height: 38px; padding-top: 1px; background: #2a2a2a; border-top: 1px solid #222; border-bottom: 1px solid #1c1c1c; }
.handle { width: 5px; height: 20px; margin: 0 2px 0 5px; background: repeating-linear-gradient(#2a2a2a 0 1px, transparent 1px 3px), repeating-linear-gradient(90deg, #777 0 2px, #2a2a2a 2px 3px); }
.tb { display: grid; place-items: center; width: 33px; height: 30px; }
.tb svg { width: 24px; height: 24px; }
.tb .ico16 { width: 16px; height: 16px; }
.tb.tiny { width: 10px; }
.tb.narrow { width: 26px; }
.tb.active { background: #555; border: 1px solid #777; border-radius: 3px; }
.sep { width: 2px; height: 20px; margin: 0 3px; background: #666; }
.slider ~ .sep { margin: 0 3px 0 2px; }
.zoomval { width: 36px; height: 22px; margin-left: 3px; border: 1px solid #555; border-radius: 3px; background: #242424; text-align: center; font-size: 11px; }
.slider { appearance: none; width: 80px; height: 24px; margin-right: 4px; background: linear-gradient(#888, #888) 4px 2px / 1px 4px no-repeat, linear-gradient(#888, #888) 40px 2px / 1px 4px no-repeat, linear-gradient(#888, #888) 75px 2px / 1px 4px no-repeat, linear-gradient(90deg, #5b7eae 50%, #555 50%) 0 14px / 100% 3px no-repeat; }
.slider::-webkit-slider-thumb { appearance: none; width: 11px; height: 12px; margin-top: 6px; border: 1px solid #333; border-radius: 2px; background: #777; }
.caret { width: 8px; height: 5px; background: #9a9a9a; clip-path: polygon(0 0, 100% 0, 50% 100%); }

.workspace { display: flex; flex: 1 0 auto; background: #323232; }
.docks { display: flex; flex-direction: column; width: 216px; }
.dock-title { display: flex; align-items: center; gap: 4px; height: 23px; padding: 0 1px 0 4px; }
.dock-title h2 { flex: 1; }
.tree { flex: 1 1 0; margin-left: 2px; padding-top: 2px; background: #282828; white-space: nowrap; }
.navigator { flex-grow: 16; }
.gallery { flex-grow: 15; padding-top: 1px; }
.tree li { display: flex; align-items: center; height: 18px; gap: 6px; padding-left: 6px; }
.tree li.child { padding-left: 26px; }
.tree .tw { margin-right: 2px; }
.tw { position: relative; flex: none; width: 10px; height: 10px; }
.tw::before { content: ""; position: absolute; background: #999; }
.tw.right::before { inset: 1px 3px 1px 2px; clip-path: polygon(0 0, 100% 50%, 0 100%); }
.tw.down::before { inset: 3px 1px 2px 1px; clip-path: polygon(0 0, 100% 0, 50% 100%); }
.hsplit { display: flex; justify-content: center; align-items: center; height: 9px; padding: 2px 0 0 4px; }
.hsplit::before { content: ""; width: 17px; height: 2px; background: repeating-linear-gradient(90deg, #888 0 2px, transparent 2px 3px); }
.vsplit { width: 8px; display: flex; align-items: center; justify-content: center; }
.vsplit::before { content: ""; width: 2px; height: 17px; background: repeating-linear-gradient(#888 0 2px, transparent 2px 3px); }
.vsplit.thin { width: 5px; }
.dock-search { display: flex; align-items: center; gap: 6px; padding: 2px 0 2px 2px; }
.searchbox { display: flex; align-items: center; flex: 1; height: 22px; padding: 0 6px 0 1px; border: 1px solid #555; border-radius: 3px; background: #262626; }
.searchbox input { flex: 1; min-width: 0; }
.dock-search button { width: 22px; margin-right: 4px; }
.bottom-tabs { display: flex; align-items: flex-start; height: 20px; padding: 1px 0 0; gap: 1px; font-family: Roboto, sans-serif; }
.bottom-tabs button { height: 16px; line-height: 17px; padding: 0 9px; font-size: 11px; border: 1px solid #484848; border-top-color: #222; border-radius: 0 0 3px 3px; background: #2e2e2e; white-space: nowrap; }
.docks .bottom-tabs button { flex: 1; padding: 0; }
.bottom-tabs .on { height: 18px; line-height: 20px; border-top: 0; background: #363636; }

.main { display: flex; flex-direction: column; flex: 1; min-width: 0; }
.doc-tabs { display: flex; align-items: flex-end; gap: 2px; height: 27px; }
.doc-tabs button { display: flex; align-items: center; gap: 11px; height: 22px; padding: 0 16px 0 9px; border: 1px solid #555; border-bottom: 0; border-radius: 3px 3px 0 0; background: #303030; }
.doc-tabs .on { height: 24px; padding: 0 13px 0 8px; background: #444; }
.canvas-frame { display: grid; flex: 1; grid-template: 1fr 14px / 1fr 14px; min-height: 900px; border: 1px solid #606060; border-top-width: 2px; border-bottom-color: #262626; }
.canvas { position: relative; overflow: hidden; background: linear-gradient(90deg, #2f2f2f 2px, transparent 2px) -1px -1px / 48px 48px, linear-gradient(#2f2f2f 2px, #232323 2px) -1px -1px / 48px 48px; }
.wires, .bookmark, .node, .count, .tip, .runbar, .orb { position: absolute; }
.wires { left: 0; top: 0; }
.bookmark { left: 734px; top: 230px; width: 180px; height: 90px; background: #647486; }
.node { display: flex; flex-direction: column; align-items: flex-start; }
.orb { left: 0; top: -6px; width: 34px; height: 34px; }
.node-head, .port { display: flex; align-items: center; border: 1px solid #0b0b0b; border-radius: 5px; background: #2c436b; white-space: nowrap; }
.node-head { align-self: stretch; justify-content: space-between; height: 23px; padding: 0 3px 0 19px; margin-left: 17px; }
.node-head span { padding-bottom: 2px; }
.port { height: 20px; margin-left: 29px; padding: 0 3px 0 6px; gap: 3px; background: #31476c; font: 11px/18px Roboto, sans-serif; }
.port .ico16 { margin-left: auto; }
.pt { width: 7px; height: 9px; background: #c8c8c8; clip-path: polygon(0 0, 100% 50%, 0 100%, 0 10%, 1px 15%, 1px 84%, 5px 50%, 1px 16%, 0 10%); }
.creator { left: 319px; top: 237px; width: 151px; }
.creator .port { width: 107px; }
.agol { left: 515px; top: 240px; width: 191px; }
.agol .port { width: 147px; }
.reader { left: 737px; top: 240px; width: 184px; }
.reader .port { width: 152px; }
.tip { width: 12px; height: 10px; background: #a0a0a0; clip-path: polygon(0 0, 100% 50%, 0 100%); }
.t1 { left: 451px; top: 264px; }
.t2 { left: 506px; top: 246px; }
.t3 { left: 687px; top: 267px; }
.t4 { left: 758px; top: 267px; }
.count { width: 10px; text-align: center; }
.c1 { left: 478px; top: 252px; }
.c2 { left: 722px; top: 263px; }
.runbar { left: 738px; top: 201px; width: 58px; height: 32px; border: 1px solid #333; background: #141414; }

.sb { display: flex; background: #2c2c2c; }
.sb.v { flex-direction: column; }
.sb button { display: grid; place-items: center; flex: none; width: 14px; height: 14px; border: 1px solid #5a5a5a; background: #383838; }
.sb i { width: 8px; height: 5px; background: #aaa; }
.sb .up { clip-path: polygon(50% 0, 100% 100%, 0 100%); }
.sb .dn { clip-path: polygon(0 0, 100% 0, 50% 100%); }
.sb .lt, .sb .rt { width: 5px; height: 8px; }
.sb .lt { clip-path: polygon(100% 0, 100% 100%, 0 50%); }
.sb .rt { clip-path: polygon(0 0, 100% 50%, 0 100%); }
.track { flex: 1; }
.thumb { border: 1px solid #5e5e5e; background: #454545; height: 100%; }
.sb.v.lite, .sb.h.lite { background: #4b4b4b; }
.lite .thumb, .lite button { background: #686868; border-color: #808080; }

.preview .dock-title { height: 17px; padding-left: 3px; padding-right: 2px; }
.preview-body { display: flex; }
.side-tools { display: flex; flex-direction: column; align-items: center; gap: 1px; width: 38px; padding: 6px 8px 0 0; }
.side-tools button { display: grid; place-items: center; width: 22px; height: 24px; }
.side-tools .on { height: 22px; border: 1px solid #777; border-radius: 3px; background: #4a4a4a; }
.side-tools hr { width: 12px; height: 2px; margin: 3px 0 1px; border: 0; background: #666; }
.table-panel { flex: 1; min-width: 0; padding-right: 1px; }
.table-panel h3 { height: 19px; margin-left: -2px; padding-top: 1px; }
.group { border: 1px solid #404040; border-radius: 3px; }
.table-panel .group { display: flex; flex-direction: column; gap: 6px; padding: 6px; }
.row { display: flex; align-items: center; gap: 7px; min-width: 0; }
.select { position: relative; display: flex; flex: 1; height: 22px; border: 1px solid #505050; border-radius: 3px; background: #272727; }
.select::after { content: ""; position: absolute; right: 6px; top: 8px; width: 8px; height: 5px; background: #999; clip-path: polygon(0 0, 100% 0, 50% 100%); }
.select select { appearance: none; flex: 1; min-width: 0; padding: 2px 20px 0 2px; }
.table-panel, .dialog .body { font: 11px/18px Roboto, "Open Sans", sans-serif; }
.btn { display: grid; place-items: center; flex: none; width: 78px; height: 20px; padding-top: 2px; border: 1px solid #7a7a7a; border-radius: 3px; background: linear-gradient(#6c6c6c, #5a5a5a); box-shadow: 0 0 0 1px #262626; }
.grid-wrap { position: relative; }
.grid-view { height: 218px; border: 1px solid #262626; overflow: hidden; background: linear-gradient(#333, #333) 12px 0 / 100% 19px no-repeat, linear-gradient(#565656, #565656) 0 0 / 12px 100% no-repeat, #282828; }
table { border-collapse: collapse; table-layout: fixed; width: 735px; font-family: "Open Sans", sans-serif; }
.w-n { width: 12px; } .w-ci { width: 135px; } .w-id { width: 99px; } .w-nm { width: 174px; } .w-ff { width: 115px; } .w-fp { width: 100px; } .w-pu { width: 100px; }
td, th { height: 19px; padding: 0 4px; line-height: 17px; text-align: left; white-space: nowrap; overflow: hidden; border: 1px solid #6a6a6a; border-top: 0; border-left: 0; }
td { padding-right: 1px; }
thead th { padding: 0 0 0 4px; background: linear-gradient(#4b4b4b, #3c3c3c); border-color: #5e5e5e; }
thead .tight { padding-left: 1px; }
tbody th { padding: 0 2px; background: #4a4a4a; }
.num { text-align: right; padding-right: 3px; }
.callout { position: absolute; border: 3px solid #f04040; box-shadow: 2px 4px 5px rgba(0, 0, 0, .55), inset 2px 3px 5px rgba(0, 0, 0, .5); }
.name-col { left: 240px; top: -6px; width: 176px; height: 90px; }
.agol-node { left: 740px; top: 346px; width: 201px; height: 59px; }
.filter { flex: 0 0 290px; }
.filter + label { margin-left: -1px; }
.row label, output { padding-top: 1px; }
.select.col { flex: 0 0 290px; margin-left: -1px; }
output { margin-left: auto; }
.status { display: flex; justify-content: flex-end; align-items: flex-end; height: 26px; border-top: 1px solid #454545; background: #323232; }
.grip { width: 11px; height: 11px; background: repeating-linear-gradient(#323232 0 1px, transparent 1px 3px), repeating-linear-gradient(90deg, #999 0 2px, #323232 2px 3px); clip-path: polygon(100% 0, 100% 100%, 0 100%); }

.dialog { position: absolute; color: #dcdcdc; background: #323232; box-shadow: 0 0 0 1px #262626, 0 3px 9px rgba(0, 0, 0, .6); }
.dialog .x { width: 30px; display: grid; place-items: center; padding-bottom: 1px; }
.dialog h3 { height: 18px; margin: 6px 0 1px -2px; padding-top: 1px; }
.dialog .body { position: relative; }
.dialog .body > .grip { position: absolute; right: 1px; bottom: 1px; }
.dialog input { height: 22px; min-width: 0; flex: 1; padding: 2px 1px 0; border: 1px solid #505050; border-radius: 3px; background: #272727; }
.dialog input:disabled { background: #2e2e2e; }
input::placeholder { color: #7a7a7a; opacity: 1; }
.muted { color: #909090; background: #2e2e2e; }
.form { display: grid; grid-template-columns: 124px 1fr; gap: 7px; align-items: center; }
.form label, .coord label { padding-top: 2px; text-align: right; white-space: nowrap; }
.btn.drop { width: 19px; height: 21px; padding: 0; }
.btn.off { color: #5a5a5a; border-color: #484848; background: #303030; box-shadow: none; }
.btn.off .caret { background: #484848; }
.btn.menu { grid-template-columns: 1fr auto; padding-right: 5px; }
.menu .caret { width: 6px; height: 4px; margin-bottom: 3px; }
.btn.presets { width: 84px; height: 22px; grid-template-columns: auto auto 1fr; justify-items: end; padding-left: 14px; padding-right: 3px; }
.btn.primary { width: 80px; height: 21px; border-color: #3aa0f0; background: linear-gradient(#6f7a80, #5c676c); }
.btn.dots { font-weight: 700; }
.btn.focus { border-color: #2a6fa8; }
.actions { display: flex; align-items: flex-start; gap: 8px; }
.grow { flex: 1; }
.pos { padding-top: 2px; text-align: right; }
.fold { display: flex; align-items: center; height: 24px; gap: 3px; padding-left: 2px; }

.fr { left: 647px; top: 403px; width: 468px; }
.fr .titlebar .x { margin-right: 3px; }
.fr .body { padding: 27px 9px 9px 9px; }
.fr .first { padding: 9px 11px 10px 0; }
.nest { padding: 3px 11px 7px 11px; }
.reader-form { display: grid; gap: 7px; padding: 11px 11px 10px 0; }
.coord { display: flex; align-items: center; gap: 7px; padding-left: 11px; }
.coord label { flex: 1; }
.coord .select { flex: 0 0 206px; }
.fold.open { height: 27px; padding-top: 5px; }
.blank { height: 128px; }
.folds { padding-top: 5px; }
.outputs { padding: 8px 0 7px 11px; }
.fr .actions { margin-top: 12px; }

.ag { left: 677px; top: 662px; width: 403px; }
.ag .body { padding: 1px 9px 9px 9px; }
.ag .form { grid-template-columns: 162px 1fr; }
.conn { padding: 10px 11px 10px 0; }
.conn p { padding: 18px 0 9px 9px; }
.details { padding-top: 5px; }
.details .fold { height: 21px; }
.ag .actions { margin-top: 8px; }

.popup { position: absolute; left: 1040px; top: 863px; width: 219px; border: 1px solid #1a1a1a; background: #292929; box-shadow: 3px 3px 5px rgba(0, 0, 0, .5); }
.popup li { display: flex; align-items: center; gap: 5px; height: 22px; padding: 0 2px 0 5px; border: 1px solid transparent; }
.popup .tw { margin-left: auto; }
.popup .line { height: 25px; padding-top: 3px; border-top: 1px solid #1a1a1a; }
.popup .hot { height: 23px; background: #0078d0; border-color: #2f9af0; color: #fff; }

.te { left: 1102px; top: 217px; width: 640px; }
.te .body { padding: 11px 12px 12px 12px; }
.panes { display: flex; height: 425px; }
.pane { display: grid; grid-template-rows: 1fr 14px; background: #282828; }
.palette { grid-template-columns: 140px 14px; }
.editor { flex: 1; }
.code { padding: 0 1px; }
.kw { color: #6a98e8; }
.arg, .paren { color: #f0d690; }
.plist { height: 411px; padding: 2px 0 0 1px; overflow: hidden; white-space: nowrap; }
.plist h4 { display: flex; align-items: center; gap: 3px; height: 15px; margin-bottom: 2px; padding: 1px 0 0 2px; border: 1px solid #767676; background: linear-gradient(#6e6e6e, #5a5a5a); }
.plist ul { font-family: "Open Sans", sans-serif; }
.attrs { margin-bottom: 5px; }
.attrs li { display: flex; align-items: center; gap: 7px; height: 18px; margin-left: 9px; padding-left: 7px; }
.attrs .sel { background: #4d4d4d; color: #fff; }
.attr { width: 12px; height: 14px; }
.fn { width: 12px; font: italic 16px/16px "Liberation Serif", serif; text-align: center; }
.plist p { height: 16px; margin: -2px 0 4px 16px; line-height: 17px; color: #5a5a5a; }
.funcs { margin-top: -1px; }
.funcs li { height: 15px; padding-left: 13px; line-height: 15px; }
.te .actions { margin-top: 12px; }

.badge { position: absolute; width: 30px; height: 30px; border-radius: 50%; background: #fa3c3c; color: #fff; font: 22px/30px "Open Sans", sans-serif; text-align: center; box-shadow: 2px 4px 5px rgba(0, 0, 0, .5); }
.b1 { left: 647px; top: 620px; }
.b2 { left: 1175px; top: 911px; }
.b3 { left: 1432px; top: 253px; }
.pointer { position: absolute; left: 1247px; top: 922px; width: 24px; height: 40px; }
```
